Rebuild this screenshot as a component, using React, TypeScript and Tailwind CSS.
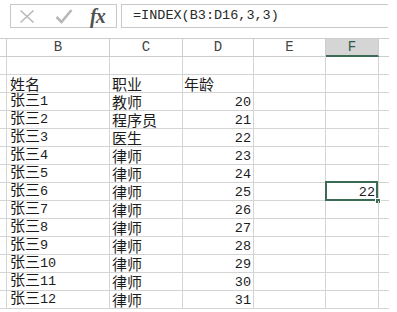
import React from 'react';

const rows: [string, string, string][] = [
  ['1', '教师', '20'],
  ['2', '程序员', '21'],
  ['3', '医生', '22'],
  ['4', '律师', '23'],
  ['5', '律师', '24'],
  ['6', '律师', '25'],
  ['7', '律师', '26'],
  ['8', '律师', '27'],
  ['9', '律师', '28'],
  ['10', '律师', '29'],
  ['11', '律师', '30'],
  ['12', '律师', '31'],
];

const cjk = "font-['Noto_Sans_CJK_SC',sans-serif] text-[15px]";
const mono = "font-['Liberation_Mono','DejaVu_Sans_Mono',monospace]";
const cell = 'h-[18px] border-r border-b border-[#d4d4d4] flex items-end';

const Row: React.FC<{ b: React.ReactNode; c?: string; d?: React.ReactNode; f?: string }> = ({
  b,
  c,
  d,
  f,
}) => (
  <div className="flex">
    <div className={`${cell} w-[7px]`} />
    <div className={`${cell} w-[103px] pl-[3px] text-[#1c1c1c]`}>{b}</div>
    <div className={`${cell} w-[73px] pl-[2px] text-[#1c1c1c]`}>
      <span className={`${cjk} leading-[16px]`}>{c}</span>
    </div>
    <div className={`${cell} w-[71px] pr-[2px] justify-between text-[#1c1c1c]`}>{d}</div>
    <div className={`${cell} w-[72px]`} />
    <div className={`${cell} w-[53px] relative justify-end pr-[3px]`}>
      {f && (
        <>
          <div className="absolute left-[-1px] top-[-2px] right-0 bottom-[-1px] border-2 border-[#3b6b53]" />
          <div className="absolute right-[-3px] bottom-[-4px] w-[6px] h-[6px] bg-[#3b6b53] border border-white" />
          <span className={`${mono} text-[13.5px] leading-[15px] text-[#1c1c1c]`}>{f}</span>
        </>
      )}
    </div>
    <div className="h-[18px] w-[10px] border-b border-[#d4d4d4]" />
  </div>
);

const HeadCell: React.FC<{ w: string; label?: string; active?: boolean }> = ({ w, label, active }) => (
  <div
    className={`h-[18px] ${w} border-r border-[#cdcdcd] flex items-center justify-center ${mono} text-[14px] ${
      active ? 'bg-[#d5d5d5] border-b-2 border-b-[#3b6b53] text-[#2f5a45]' : 'border-b border-b-[#cdcdcd] text-[#444]'
    }`}
  >
    {label}
  </div>
);

export default function App() {
  return (
    <div className="w-[397px] h-[312px] bg-white overflow-hidden">
      <div className="flex pt-[4px] pl-[10px] pr-[9px] h-[28px]">
        <div className="w-[107px] h-[24px] border border-[#c8c8c8] flex items-center pl-[8px]">
          <svg width="16" height="15" viewBox="0 0 16 15">
            <path d="M1.5 1.5 L14.5 13.5 M14.5 1.5 L1.5 13.5" stroke="#b8b8b8" strokeWidth="1.6" fill="none" />
          </svg>
          <svg width="18" height="16" viewBox="0 0 18 16" className="ml-[20px]">
            <path d="M1.5 9 L6.5 14 L16.5 2" stroke="#b8b8b8" strokeWidth="2.6" fill="none" />
          </svg>
          <span className="ml-[17px] font-['Liberation_Serif',serif] italic font-bold text-[20px] leading-none text-[#505050] tracking-[-1px]">
            fx
          </span>
        </div>
        <div className="ml-[4px] flex-1 h-[24px] border-l border-t border-b border-[#c8c8c8] flex items-center pl-[11px]">
          <span className={`${mono} text-[13.5px] text-[#2a2a2a]`}>=INDEX(B3:D16,3,3)</span>
        </div>
      </div>

      <div className="mt-[10px] border-t border-[#cdcdcd] w-[389px]">
        <div className="flex">
          <HeadCell w="w-[7px]" />
          <HeadCell w="w-[103px]" label="B" />
          <HeadCell w="w-[73px]" label="C" />
          <HeadCell w="w-[71px]" label="D" />
          <HeadCell w="w-[72px]" label="E" />
          <HeadCell w="w-[53px]" label="F" active />
          <div className="h-[18px] w-[10px] border-b border-[#cdcdcd]" />
        </div>
        <Row b="" />
        <Row
          b={<span className={`${cjk} leading-[16px]`}>姓名</span>}
          c="职业"
          d={<span className={`${cjk} leading-[16px] pl-[1px]`}>年龄</span>}
        />
        {rows.map(([n, job, age]) => (
          <Row
            key={n}
            b={
              <span className="leading-[16px]">
                <span className={cjk}>张三</span>
                <span className={`${mono} text-[13.5px]`}>{n}</span>
              </span>
            }
            c={job}
            d={
              <>
                <span />
                <span className={`${mono} text-[13.5px] leading-[15px]`}>{age}</span>
              </>
            }
            f={n === '6' ? '22' : undefined}
          />
        ))}
      </div>
    </div>
  );
}
